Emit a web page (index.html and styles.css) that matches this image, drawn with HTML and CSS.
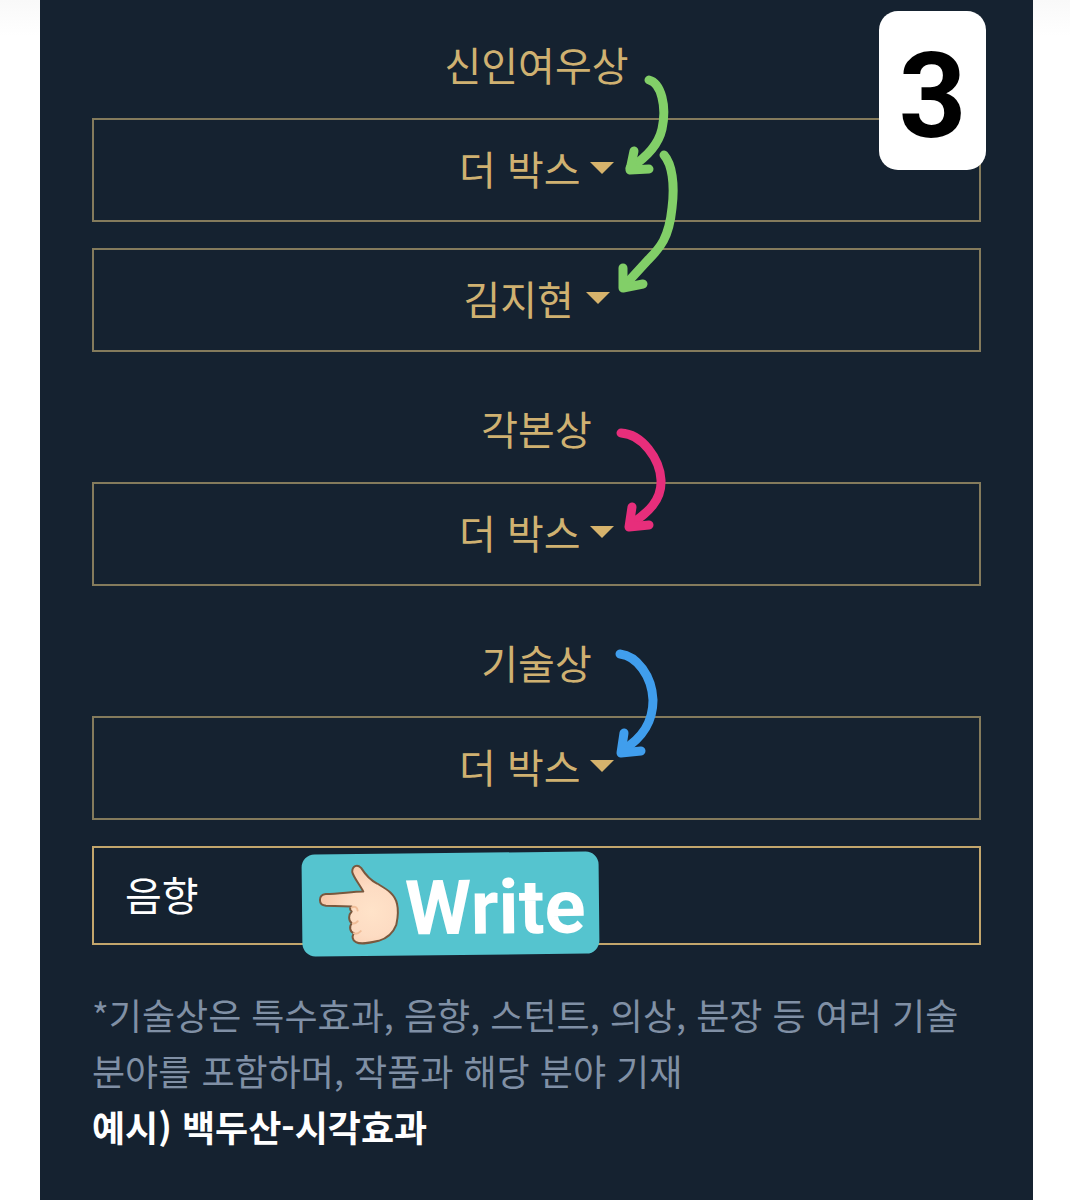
FILE: index.html
```html
<!DOCTYPE html>
<html lang="ko">
<head>
    <meta charset="UTF-8">
    <meta name="viewport" content="width=device-width, initial-scale=1.0">
    <title>투표</title>
    <link rel="stylesheet" href="styles.css">
</head>
<body>
    <main class="panel">
        <section class="award">
            <label class="award-title" for="actress-film">신인여우상</label>
            <div class="dropdown">
                <select id="actress-film">
                    <option>더 박스</option>
                </select>
                <span class="caret"></span>
            </div>
            <div class="dropdown">
                <select id="actress-name" aria-label="신인여우상 후보">
                    <option>김지현</option>
                </select>
                <span class="caret"></span>
            </div>
        </section>

        <section class="award">
            <label class="award-title" for="script-film">각본상</label>
            <div class="dropdown">
                <select id="script-film">
                    <option>더 박스</option>
                </select>
                <span class="caret"></span>
            </div>
        </section>

        <section class="award">
            <label class="award-title" for="tech-film">기술상</label>
            <div class="dropdown">
                <select id="tech-film">
                    <option>더 박스</option>
                </select>
                <span class="caret"></span>
            </div>
            <div class="write-row">
                <input class="write-input" type="text" id="tech-field" aria-label="기술 분야" value="음향">
                <!-- Write sticker -->
                <div class="write-sticker">
                    <svg class="hand" viewBox="0 0 84 84" aria-hidden="true">
                        <defs>
                            <radialGradient id="skin" gradientUnits="userSpaceOnUse" cx="54" cy="48" r="50">
                                <stop offset="0" stop-color="#ffe3c9"/>
                                <stop offset="0.5" stop-color="#fddcc3"/>
                                <stop offset="1" stop-color="#f8c9aa"/>
                            </radialGradient>
                        </defs>
                        <path d="M46 28C43 22 36 13 35 8C35 2 40 0 44 4C49 12 54 17 60 20C68 25 78 30 80 41C82 50 80 57 79 62C75 72 68 76 61 78C52 80 43 82 38 79C34 77 34 73 36 70C32 69 31 63 34 60C30 57 31 51 34 48C31 45 33 44 34 43L8 42C0 41 0 31 8 30C22 30 34 28 46 28Z" fill="url(#skin)" stroke="#79583e" stroke-width="2" stroke-linejoin="round"/>
                        <path d="M34 44C37 42 40 44 40 47M35 60C37 61 38 60 40 58M36 70C38 71 41 70 43 68" fill="none" stroke="#f0bd98" stroke-width="2" stroke-linecap="round"/>
                    </svg>
                    <span class="write-text">Write</span>
                </div>
            </div>
        </section>

        <p class="note">*기술상은 특수효과, 음향, 스턴트, 의상, 분장 등 여러 기술 분야를 포함하며, 작품과 해당 분야 기재<br><strong>예시) 백두산-시각효과</strong></p>

        <div class="number-sticker">3</div>

        <!-- Hand drawn arrows -->
        <svg class="arrows" viewBox="600 60 100 720" aria-hidden="true">
            <g class="arrow green">
                <path d="M648 80C660 83 666 106 661 129C657 147 643 159 629 168"/>
                <path d="M633 151L629 170L648 169"/>
                <path d="M663 155C671 164 674 184 671 208C668 238 659 248 647 260L625 284"/>
                <path d="M622 268L622 288L642 284"/>
            </g>
            <g class="arrow pink">
                <path d="M620 433C641 434 659 459 660 480C661 500 647 513 630 524"/>
                <path d="M631 507L628 527L648 525"/>
            </g>
            <g class="arrow blue">
                <path d="M619 654C636 656 651 676 652 700C652 723 641 738 622 750"/>
                <path d="M623 733L620 753L640 751"/>
            </g>
        </svg>
    </main>
</body>
</html>
```

FILE: styles.css
```css
* {
    box-sizing: border-box;
}
body {
    margin: 0;
    font-family: "Noto Sans CJK KR", sans-serif;
    background: linear-gradient(#f9f9f9, #fff 36px);
}
.panel {
    position: relative;
    min-height: 100vh;
    margin: 0 37px 0 40px;
    padding: 34px 52px 40px;
    background-color: #152230;
    color: #cfb171;
}
.award {
    margin-bottom: 46px;
}
.award-title {
    display: block;
    margin-bottom: 24px;
    font-size: 40px;
    line-height: 60px;
    text-align: center;
}
.dropdown {
    display: flex;
    align-items: center;
    justify-content: center;
    gap: 11px;
    height: 104px;
    border: 2px solid #847b5c;
}
.dropdown + .dropdown,
.write-row {
    margin-top: 26px;
}
.dropdown select {
    appearance: none;
    padding: 0 0 4px;
    border: none;
    background: none;
    color: inherit;
    font-family: inherit;
    font-size: 40px;
    line-height: 60px;
    cursor: pointer;
}
.caret {
    margin-bottom: 4px;
    border-top: 12px solid #d6b36c;
    border-left: 12px solid transparent;
    border-right: 12px solid transparent;
}
.write-row {
    position: relative;
}
.write-input {
    display: block;
    width: 100%;
    height: 99px;
    padding: 0 31px 4px;
    border: 2px solid #c2a66c;
    border-radius: 0;
    background: none;
    color: #fff;
    font-family: inherit;
    font-size: 40px;
}
.write-sticker {
    position: absolute;
    top: 7px;
    left: 210px;
    display: flex;
    align-items: center;
    gap: 4px;
    width: 297px;
    height: 102px;
    padding-left: 16px;
    border-radius: 13px;
    background-color: #55c4cf;
    color: #fff;
    font-family: Roboto, sans-serif;
    font-size: 76px;
    font-weight: bold;
    transform: rotate(-0.6deg);
}
.write-text {
    padding-top: 8px;
}
.hand {
    flex: none;
    width: 83px;
    height: 83px;
}
.note {
    margin: -5px 0 0;
    color: #8090a5;
    font-size: 36px;
    line-height: 56px;
}
.note strong {
    color: #fff;
}
.number-sticker {
    position: absolute;
    top: 11px;
    right: 47px;
    width: 107px;
    height: 159px;
    border-radius: 19px;
    background-color: #fff;
    color: #000;
    font-family: Roboto, sans-serif;
    font-size: 118px;
    font-weight: bold;
    line-height: 172px;
    text-align: center;
}
.arrows {
    position: absolute;
    top: 60px;
    left: calc(50% + 64px);
    width: 100px;
    height: 720px;
    pointer-events: none;
}
.arrow {
    fill: none;
    stroke-width: 9;
    stroke-linecap: round;
    stroke-linejoin: round;
}
.green {
    stroke: #82cf68;
}
.pink {
    stroke: #e72e7b;
}
.blue {
    stroke: #409eed;
}
```
